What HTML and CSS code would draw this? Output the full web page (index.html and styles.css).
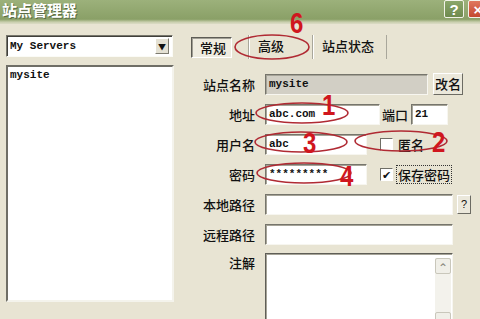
FILE: index.html
```html
<!DOCTYPE html>
<html lang="zh">
<head>
  <meta charset="UTF-8" />
  <title>站点管理器</title>
  <link rel="stylesheet" href="styles.css">
</head>
<body>
  <div class="window">
    <div class="titlebar">
      <span class="title">站点管理器</span>
      <span class="tb-btn help">?</span>
      <span class="tb-btn close">×</span>
    </div>

    <div class="main">
      <div class="left">
        <div class="combo">
          <span class="combo-text">My Servers</span>
          <span class="drop">&#9660;</span>
        </div>
        <div class="listbox">mysite</div>
      </div>

      <div class="right">
        <div class="tabs">
          <span class="tab active">常规</span>
          <span class="tab tab-adv">高级</span>
          <span class="tab tab-state">站点状态</span>
        </div>

        <div class="form">
          <div class="row">
            <label>站点名称</label>
            <span class="field grey w-name">mysite</span>
            <span class="btn btn-rename">改名</span>
          </div>
          <div class="row">
            <label>地址</label>
            <span class="field w-addr">abc.com</span>
            <span class="inline-label">端口</span>
            <span class="field w-port">21</span>
          </div>
          <div class="row">
            <label>用户名</label>
            <span class="field w-user">abc</span>
            <span class="check"></span>
            <span class="check-label">匿名</span>
          </div>
          <div class="row">
            <label>密码</label>
            <span class="field w-user">*********</span>
            <span class="check checked">&#10004;</span>
            <span class="check-label focused">保存密码</span>
          </div>
          <div class="row">
            <label>本地路径</label>
            <span class="field w-path"></span>
            <span class="btn btn-q">?</span>
          </div>
          <div class="row">
            <label>远程路径</label>
            <span class="field w-path"></span>
          </div>
          <div class="row row-note">
            <label>注解</label>
            <div class="note">
              <div class="note-text"></div>
              <div class="scroll">
                <span class="sbtn">&#8963;</span>
                <span class="sbtn">&#8964;</span>
              </div>
            </div>
          </div>
        </div>
      </div>
    </div>

    <!-- red hand-drawn marks on top of the dialog -->
    <svg class="marks" width="480" height="319" viewBox="0 0 480 319">
      <g fill="none" stroke="#b02a33" stroke-width="1.6">
        <ellipse cx="272" cy="47" rx="37" ry="12" />
        <ellipse cx="302" cy="113" rx="46" ry="10" />
        <ellipse cx="301" cy="142" rx="46" ry="10" />
        <ellipse cx="401" cy="141" rx="46" ry="10" />
        <ellipse cx="304" cy="173" rx="47" ry="10" />
      </g>
      <g class="num">
        <text transform="translate(290 33) scale(0.8 1)">6</text>
        <text transform="translate(322 115) scale(0.8 1)">1</text>
        <text transform="translate(432 152) scale(0.8 1)">2</text>
        <text transform="translate(303 153) scale(0.8 1)">3</text>
        <text transform="translate(340 186) scale(0.8 1)">4</text>
      </g>
    </svg>
  </div>
</body>
</html>
```

FILE: styles.css
```css
* { box-sizing: border-box; }
body {
  margin: 0;
  background-color: #e8e4d3;
  font-family: "Noto Sans CJK SC", sans-serif;
  font-size: 13px;
  font-weight: 500;
  color: #111;
  overflow: hidden;
}
.window {
  position: relative;
  width: 480px;
  height: 319px;
  overflow: hidden;
}
.titlebar {
  height: 24px;
  display: flex;
  align-items: flex-start;
  background: linear-gradient(#9cb17b, #8aa067 80%, #c9cfae 92%, #dcdcc6);
}
.title {
  color: #fff;
  font-size: 15px;
  font-weight: bold;
  line-height: 19px;
  padding-left: 2px;
  text-shadow: 1px 1px 0 #5b6b45;
  flex: 1;
}
.tb-btn {
  width: 20px;
  height: 18px;
  color: #fff;
  font-family: "Liberation Sans", sans-serif;
  font-weight: bold;
  font-size: 15px;
  line-height: 17px;
  text-align: center;
  border: 1px solid #f2f2e8;
  border-radius: 2px;
}
.help {
  background: linear-gradient(#8aa66a, #6f8a4f);
  margin-right: 4px;
}
.close {
  background: linear-gradient(#e0785e, #c4492f);
  margin-right: -8px;
}

.main {
  display: flex;
  gap: 16px;
  padding: 11px 0 0 6px;
}
.left { width: 168px; }
.combo {
  width: 167px;
  height: 22px;
  display: flex;
  align-items: center;
  background: #fff;
  border: 1px solid;
  border-color: #77766c #fbfbf6 #fbfbf6 #77766c;
  box-shadow: inset 1px 1px 0 #403f3a;
  padding: 0 3px 0 3px;
}
.combo-text, .field, .listbox {
  font-family: "Liberation Mono", monospace;
  font-weight: bold;
  font-size: 11px;
}
.combo-text { flex: 1; }
.drop {
  width: 14px;
  height: 16px;
  font-size: 8px;
  line-height: 16px;
  text-align: center;
  background: #e4e1d4;
  border: 1px solid;
  border-color: #fff #7d7b70 #7d7b70 #fff;
}
.listbox {
  margin-top: 8px;
  height: 237px;
  background: #fff;
  border: 2px solid;
  border-color: #6f6e66 #f4f3ec #f4f3ec #6f6e66;
  padding: 1px 2px;
  line-height: 14px;
}

.right { width: 290px; }
.tabs {
  display: flex;
  align-items: center;
  height: 24px;
  padding-left: 1px;
}
.tab {
  height: 24px;
  line-height: 22px;
}
.active {
  width: 41px;
  height: 21px;
  line-height: 19px;
  padding-left: 8px;
  background: #efece0;
  border: 1px solid;
  border-color: #5d5c55 #fff #fff #5d5c55;
  box-shadow: inset 1px 1px 0 #a09e94;
  margin-right: 16px;
}
.tab-adv, .tab-state {
  border-left: 1px solid #a9a79b;
  box-shadow: inset 1px 0 0 #fff;
  padding-left: 9px;
}
.tab-adv { width: 64px; }
.tab-state { width: 75px; border-right: 1px solid #a9a79b; }

.form {
  display: flex;
  flex-direction: column;
  gap: 8px;
  margin-top: 14px;
}
.row {
  display: flex;
  align-items: center;
  height: 22px;
}
.row label {
  width: 65px;
  text-align: right;
  margin-right: 10px;
}
.field {
  height: 21px;
  line-height: 19px;
  background: #fff;
  border: 1px solid;
  border-color: #76756c #f7f6f0 #f7f6f0 #76756c;
  box-shadow: inset 1px 1px 0 #a6a498;
  padding-left: 3px;
}
.grey { background: #d2cfc5; }
.w-name { width: 163px; }
.w-addr { width: 115px; }
.w-port { width: 37px; }
.w-user { width: 102px; }
.w-path { width: 188px; }
.inline-label { margin: 0 3px 0 2px; }
.btn {
  height: 22px;
  text-align: center;
  line-height: 20px;
  background: #ebe8db;
  border: 1px solid;
  border-color: #fff #6c6b63 #6c6b63 #fff;
}
.btn-rename { width: 30px; margin-left: 5px; }
.btn-q {
  width: 14px;
  height: 19px;
  line-height: 17px;
  font-size: 11px;
  font-family: "Liberation Sans", sans-serif;
  margin-left: 4px;
}
.check {
  width: 13px;
  height: 13px;
  margin-left: 13px;
  background: #fff;
  border: 1px solid;
  border-color: #6f6e66 #fff #fff #6f6e66;
  font-size: 11px;
  line-height: 11px;
  text-align: center;
}
.check-label { margin-left: 5px; }
.focused {
  margin-left: 3px;
  padding: 0 1px;
  line-height: 17px;
  border: 1px dotted #333;
}
.row-note { align-items: flex-start; height: 78px; }
.note {
  width: 188px;
  height: 78px;
  display: flex;
  background: #fff;
  border: 1px solid;
  border-color: #5f5e57 #f7f6f0 #f7f6f0 #5f5e57;
  box-shadow: inset 1px 1px 0 #a6a498;
}
.note-text { flex: 1; }
.scroll {
  width: 16px;
  margin: 4px 1px 2px 0;
  display: flex;
  flex-direction: column;
  justify-content: space-between;
  background: #f3f2ec;
}
.sbtn {
  height: 16px;
  font-size: 12px;
  line-height: 16px;
  text-align: center;
  color: #8b8a80;
  background: #f0efe8;
  border: 1px solid #c9c7bb;
  border-radius: 2px;
}

.marks {
  position: absolute;
  top: 0;
  left: 0;
  pointer-events: none;
}
.num text {
  font-family: "Liberation Sans", sans-serif;
  font-weight: bold;
  font-size: 30px;
  fill: #d0161e;
}
```
